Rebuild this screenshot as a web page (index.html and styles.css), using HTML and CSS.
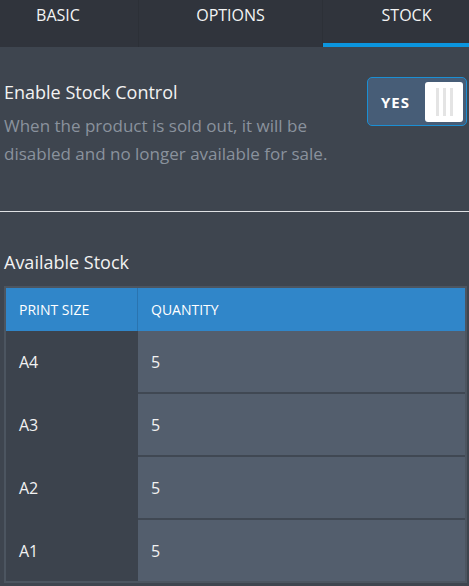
FILE: index.html
```html
<!DOCTYPE html>
<html lang="en">
<head>
    <meta charset="UTF-8">
    <meta name="viewport" content="width=device-width, initial-scale=1.0">
    <title>Product Stock</title>
    <link rel="stylesheet" href="styles.css">
</head>
<body>

    <nav class="tabs">
        <div class="tab tab-basic">BASIC</div>
        <div class="tab tab-options">OPTIONS</div>
        <div class="tab tab-stock active">STOCK</div>
    </nav>

    <main class="content">
        <section class="setting">
            <div class="setting-text">
                <h2 class="setting-title">Enable Stock Control</h2>
                <p class="setting-desc">When the product is sold out, it will be disabled and no longer available for sale.</p>
            </div>
            <div class="toggle">
                <span class="toggle-label">YES</span>
                <span class="toggle-knob">
                    <i></i><i></i><i></i>
                </span>
            </div>
        </section>

        <hr class="divider">

        <h2 class="section-title">Available Stock</h2>
        <table class="stock-table">
            <thead>
                <tr>
                    <th class="col-size">PRINT SIZE</th>
                    <th>QUANTITY</th>
                </tr>
            </thead>
            <tbody>
                <tr><td class="col-size">A4</td><td>5</td></tr>
                <tr><td class="col-size">A3</td><td>5</td></tr>
                <tr><td class="col-size">A2</td><td>5</td></tr>
                <tr><td class="col-size">A1</td><td>5</td></tr>
            </tbody>
        </table>
    </main>

</body>
</html>
```

FILE: styles.css
```css
body {
    font-family: "Open Sans", "Noto Sans", sans-serif;
    background-color: #3e454f;
    color: #f2f2f2;
    margin: 0;
    padding: 0;
}

.tabs {
    display: flex;
    height: 47px;
    background: #30343c;
}

.tab {
    box-sizing: border-box;
    height: 47px;
    padding-top: 4px;
    font-size: 16px;
    line-height: 22px;
    text-align: center;
    color: #f4f4f4;
    border-right: 1px solid #2c3037;
}

.tab-basic {
    width: 139px;
    padding-right: 22px;
}

.tab-options {
    width: 184px;
}

.tab-stock {
    width: 146px;
    padding-left: 21px;
    border-right: none;
}

.tab.active {
    border-bottom: 4px solid #0b95de;
}

.setting {
    display: flex;
    justify-content: space-between;
    align-items: flex-start;
    padding: 0 2px 0 4px;
    margin-top: 33px;
}

.setting-text {
    max-width: 340px;
}

.setting-title {
    margin: 0;
    font-size: 18px;
    font-weight: normal;
    line-height: 25px;
}

.setting-desc {
    margin: 7px 0 0;
    font-size: 17px;
    line-height: 28px;
    color: #8a929d;
}

.toggle {
    box-sizing: border-box;
    flex-shrink: 0;
    display: flex;
    align-items: center;
    justify-content: space-between;
    width: 100px;
    height: 49px;
    margin-top: -3px;
    padding: 0 3px 0 13px;
    background: #475d77;
    border: 1px solid #1b8fd4;
    border-radius: 5px;
}

.toggle-label {
    font-size: 15px;
    font-weight: bold;
    letter-spacing: 1px;
    color: #ffffff;
}

.toggle-knob {
    box-sizing: border-box;
    display: flex;
    justify-content: center;
    gap: 4px;
    width: 38px;
    height: 40px;
    padding: 6px 0;
    background: #ffffff;
    border-radius: 3px;
}

.toggle-knob i {
    width: 3px;
    background: #e4e4e4;
}

.divider {
    margin: 43px 0 0;
    border: none;
    border-top: 1px solid #dfe1e4;
}

.section-title {
    margin: 38px 4px 11px;
    font-size: 18px;
    font-weight: normal;
    line-height: 25px;
}

.stock-table {
    width: calc(100% - 6px);
    margin-left: 4px;
    border-collapse: separate;
    border-spacing: 0;
    border: 2px solid #4c5560;
}

th, td {
    padding: 0 0 0 13px;
    text-align: left;
}

th {
    height: 43px;
    background: #3086c9;
    font-size: 14px;
    font-weight: normal;
    color: #ffffff;
}

th.col-size {
    border-right: 1px solid #2a74b0;
}

td {
    height: 61px;
    background: #535e6d;
    font-size: 16px;
}

tbody tr + tr td {
    border-top: 2px solid #404853;
}

tbody tr + tr td.col-size {
    border-top-color: #3c434d;
}

td.col-size {
    width: 119px;
    background: #3c434d;
}
```
